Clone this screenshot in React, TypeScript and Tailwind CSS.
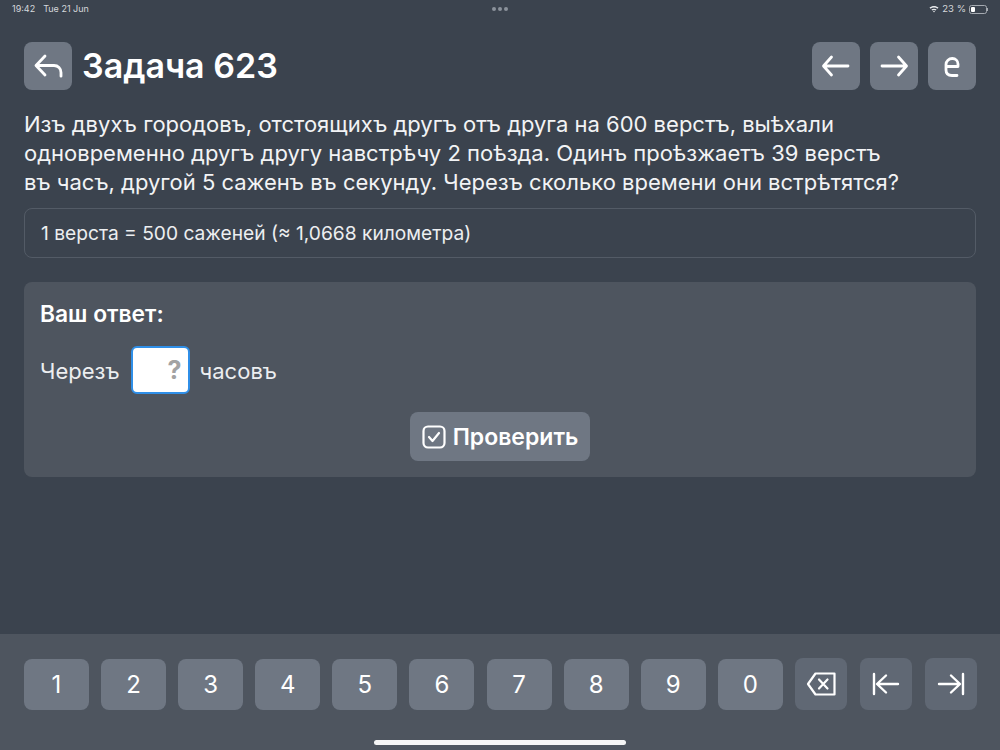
const digits = ['1', '2', '3', '4', '5', '6', '7', '8', '9', '0'];

const stroke = {
  fill: 'none',
  stroke: 'currentColor',
  strokeWidth: 2.8,
  strokeLinecap: 'round' as const,
  strokeLinejoin: 'round' as const,
};

function HeadButton({ children }: { children: React.ReactNode }) {
  return (
    <button className="w-12 h-12 rounded-lg bg-[#6f7783] text-white flex items-center justify-center">
      {children}
    </button>
  );
}

function KeyIcon({ children }: { children: React.ReactNode }) {
  return (
    <button className="w-[52px] h-[52px] rounded-lg bg-[#606874] text-white flex items-center justify-center">
      {children}
    </button>
  );
}

export default function App() {
  return (
    <div className="relative w-[1000px] h-[750px] overflow-hidden flex flex-col bg-[#3b434e] text-white font-['Inter',sans-serif]">
      {/* status bar */}
      <div className="h-[18px] px-3 flex items-center justify-between text-[9px] text-[#d5d8dc] shrink-0">
        <div className="flex gap-2">
          <span>19:42</span>
          <span>Tue 21 Jun</span>
        </div>
        <div className="absolute left-[492px] top-[7px] flex gap-[2px]">
          <span className="w-[4px] h-[4px] rounded-full bg-[#8b929b]"></span>
          <span className="w-[4px] h-[4px] rounded-full bg-[#8b929b]"></span>
          <span className="w-[4px] h-[4px] rounded-full bg-[#8b929b]"></span>
        </div>
        <div className="flex items-center gap-[3px]">
          <svg width="10" height="8" viewBox="0 0 10 8">
            <path d="M0.500 2.600C3 0.400 7 0.400 9.500 2.600L8.500 3.700C6.500 2 3.500 2 1.500 3.700Z" fill="#e5e7ea" />
            <path d="M2.400 4.600C3.900 3.400 6.100 3.400 7.600 4.600L6.600 5.600C5.600 4.900 4.400 4.900 3.400 5.600Z" fill="#e5e7ea" />
            <path d="M4 6.300C4.600 5.900 5.400 5.900 6 6.300L5 7.500Z" fill="#e5e7ea" />
          </svg>
          <span className="text-[9.500px]">23 %</span>
          <div className="flex items-center">
            <div className="w-[18px] h-[9px] rounded-[2.500px] border border-[#a5aab1] p-[1px]">
              <div className="w-[4px] h-full rounded-[1px] bg-white"></div>
            </div>
            <div className="w-[1px] h-[3px] bg-[#a5aab1]"></div>
          </div>
        </div>
      </div>

      <main className="flex-1 px-6 pt-6">
        <div className="flex items-center justify-between">
          <div className="flex items-center gap-[10px]">
            <HeadButton>
              <svg width="32" height="32" viewBox="0 0 32 32" {...stroke}>
                <path d="M13 6 4 15.500l9 9.500" />
                <path d="M5 15.500h17c4 0 7 3 7 7v3.700" />
              </svg>
            </HeadButton>
            <h1 className="text-[34px] leading-[48px] font-semibold">Задача 623</h1>
          </div>
          <div className="flex gap-[10px]">
            <HeadButton>
              <svg width="32" height="32" viewBox="0 0 32 32" {...stroke}>
                <path d="M11.500 7 3.500 16l8 9M4 16h24" />
              </svg>
            </HeadButton>
            <HeadButton>
              <svg width="32" height="32" viewBox="0 0 32 32" {...stroke}>
                <path d="M20.500 7 28.500 16l-8 9M28 16H4" />
              </svg>
            </HeadButton>
            <HeadButton>
              <svg width="32" height="32" viewBox="0 0 32 32" {...stroke}>
                <path d="M10 16.500h12V14c0-3-2.300-5.500-5.700-5.500S10 11 10 14.500V20c0 3.500 2.300 5.500 6 5.500h5" />
              </svg>
            </HeadButton>
          </div>
        </div>

        <p className="mt-[20px] text-[22px] leading-[29px] text-[#f2f3f5]">
          Изъ двухъ городовъ, отстоящихъ другъ отъ друга на 600 верстъ, выѣхали
          <br />
          одновременно другъ другу навстрѣчу 2 поѣзда. Одинъ проѣзжаетъ 39 верстъ
          <br />
          въ часъ, другой 5 саженъ въ секунду. Черезъ сколько времени они встрѣтятся?
        </p>

        <div className="mt-[11px] h-[50px] px-4 flex items-center rounded-lg border border-[#535b66] text-[19.200px] text-[#eceef0]">
          <span>1 верста = 500 саженей (≈ 1,0668 километра)</span>
        </div>

        <section className="mt-6 h-[195px] rounded-lg bg-[#4e555f] px-4 pt-[17px]">
          <h2 className="text-[22.800px] leading-[30px] font-semibold">Ваш ответ:</h2>
          <div className="mt-[17px] flex items-center text-[22px] leading-[30px] text-[#eceef0]">
            <span className="pt-[1px]">Черезъ</span>
            <div className="ml-[11px] mr-[10px] w-[59px] h-[48px] rounded-md bg-white border-2 border-[#2f8fe8] flex items-center justify-end pr-[6px]">
              <span className="text-[25px] font-bold text-[#a3a3a3]">?</span>
            </div>
            <span className="pt-[1px]">часовъ</span>
          </div>
          <div className="mt-[18px] flex justify-center">
            <button className="w-[180px] h-[49px] rounded-lg bg-[#6f7783] flex items-center justify-center gap-[7px] text-[23px] font-semibold">
              <svg width="24" height="24" viewBox="0 0 24 24" fill="none" stroke="currentColor" strokeWidth="2.200" strokeLinecap="round" strokeLinejoin="round">
                <rect x="1.500" y="1.500" width="21" height="21" rx="4.500" />
                <path d="m7 12 3.500 4L17 8" />
              </svg>
              <span className="pt-[2px]">Проверить</span>
            </button>
          </div>
        </section>
      </main>

      {/* keyboard */}
      <div className="relative h-[116px] shrink-0 bg-[#4e555f] pl-6 pt-[24px]">
        <div className="flex items-end">
          <div className="flex gap-[12.100px]">
            {digits.map((d) => (
              <button key={d} className="w-[65px] h-[51px] rounded-lg bg-[#6f7783] text-[24px] flex items-center justify-center">
                {d}
              </button>
            ))}
          </div>
          <div className="ml-[12px] flex gap-[13px]">
            <KeyIcon>
              <svg width="30" height="26" viewBox="0 0 30 26" fill="none" stroke="currentColor" strokeWidth="2.200" strokeLinejoin="round" strokeLinecap="round">
                <path d="M9.500 2.500h19v21h-19L2 13Z" />
                <path d="m13 8.500 8.500 9M21.500 8.500l-8.500 9" />
              </svg>
            </KeyIcon>
            <KeyIcon>
              <svg width="28" height="24" viewBox="0 0 28 24" {...stroke} strokeWidth={2.4}>
                <path d="M2 2v20M14 3.500 5 12l9 8.500M5.500 12H26" />
              </svg>
            </KeyIcon>
            <KeyIcon>
              <svg width="28" height="24" viewBox="0 0 28 24" {...stroke} strokeWidth={2.4}>
                <path d="M26 2v20M14 3.500 23 12l-9 8.500M22.500 12H2" />
              </svg>
            </KeyIcon>
          </div>
        </div>
        <div className="absolute left-[374px] bottom-[5px] w-[252px] h-[5px] rounded-full bg-[#f5f5f5]"></div>
      </div>
    </div>
  );
}
